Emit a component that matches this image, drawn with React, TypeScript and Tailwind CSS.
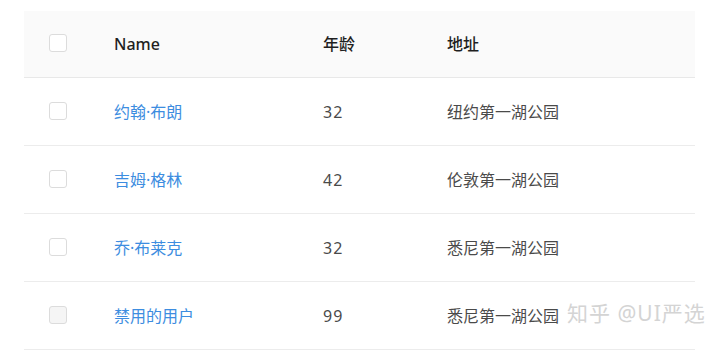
const rows = [
  { name: '约翰·布朗', age: 32, address: '纽约第一湖公园', disabled: false },
  { name: '吉姆·格林', age: 42, address: '伦敦第一湖公园', disabled: false },
  { name: '乔·布莱克', age: 32, address: '悉尼第一湖公园', disabled: false },
  { name: '禁用的用户', age: 99, address: '悉尼第一湖公园', disabled: true },
];

function Checkbox({ disabled }: { disabled?: boolean }) {
  return (
    <span
      className={`block w-[18px] h-[18px] rounded-[3px] border ${
        disabled ? 'bg-[#f5f5f5] border-[#dcdcdc]' : 'bg-white border-[#dcdcdc]'
      }`}
    />
  );
}

export default function App() {
  return (
    <div
      className="relative w-[720px] h-[358px] bg-white pt-[11px] pl-[24px] text-[16px] overflow-hidden"
      style={{ fontFamily: '"Noto Sans", "Noto Sans CJK SC", sans-serif' }}
    >
      <div className="w-[671px]">
        {/* header */}
        <div className="grid grid-cols-[90px_209px_124px_1fr] items-center h-[67px] bg-[#fafafa] border-b border-[#e8e8e8] text-[#1f1f1f] font-medium">
          <div className="pl-[25px] -mt-[2px]">
            <Checkbox />
          </div>
          <div>Name</div>
          <div>年龄</div>
          <div>地址</div>
        </div>

        {/* body */}
        {rows.map((r) => (
          <div
            key={r.name}
            className="grid grid-cols-[90px_209px_124px_1fr] items-center h-[68px] border-b border-[#ececec]"
          >
            <div className="pl-[25px] -mt-[2px]">
              <Checkbox disabled={r.disabled} />
            </div>
            <div className="text-[#3d8de0]">{r.name}</div>
            <div className="text-[#4a4a4a] tracking-[1px]">{r.age}</div>
            <div className="text-[#4a4a4a]">{r.address}</div>
          </div>
        ))}
      </div>

      {/* watermark */}
      <div
        className="absolute left-[567px] top-[298px] text-[21px] text-[#d4d4d4] tracking-[1px]"
        style={{ textShadow: '0 0 2px #fff' }}
      >
        知乎 @UI严选
      </div>
    </div>
  );
}
